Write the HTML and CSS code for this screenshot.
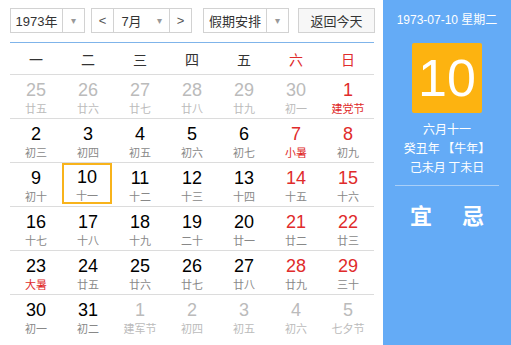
FILE: index.html
```html
<!DOCTYPE html>
<html>
<head>
<meta charset="utf-8">
<link rel="stylesheet" href="styles.css">
</head>
<body>
<div class="page">
  <div class="main">
    <div class="toolbar">
      <div class="ctl year"><span class="val">1973年</span><span class="arr">▾</span></div>
      <div class="ctl month"><span class="nav">&lt;</span><span class="val">7月</span><span class="arr">▾</span><span class="nav">&gt;</span></div>
      <div class="ctl holiday"><span class="val">假期安排</span><span class="arr">▾</span></div>
      <div class="ctl btn">返回今天</div>
    </div>
    <div class="grid">
      <div class="week">
        <span>一</span><span>二</span><span>三</span><span>四</span><span>五</span><span class="red">六</span><span class="red">日</span>
      </div>
      <div class="row">
        <div class="cell other"><b>25</b><i>廿五</i></div>
        <div class="cell other"><b>26</b><i>廿六</i></div>
        <div class="cell other"><b>27</b><i>廿七</i></div>
        <div class="cell other"><b>28</b><i>廿八</i></div>
        <div class="cell other"><b>29</b><i>廿九</i></div>
        <div class="cell other"><b>30</b><i>初一</i></div>
        <div class="cell wk"><b>1</b><i class="fest">建党节</i></div>
      </div>
      <div class="row">
        <div class="cell"><b>2</b><i>初三</i></div>
        <div class="cell"><b>3</b><i>初四</i></div>
        <div class="cell"><b>4</b><i>初五</i></div>
        <div class="cell"><b>5</b><i>初六</i></div>
        <div class="cell"><b>6</b><i>初七</i></div>
        <div class="cell wk"><b>7</b><i class="fest">小暑</i></div>
        <div class="cell wk"><b>8</b><i>初九</i></div>
      </div>
      <div class="row">
        <div class="cell"><b>9</b><i>初十</i></div>
        <div class="cell sel"><b>10</b><i>十一</i></div>
        <div class="cell"><b>11</b><i>十二</i></div>
        <div class="cell"><b>12</b><i>十三</i></div>
        <div class="cell"><b>13</b><i>十四</i></div>
        <div class="cell wk"><b>14</b><i>十五</i></div>
        <div class="cell wk"><b>15</b><i>十六</i></div>
      </div>
      <div class="row">
        <div class="cell"><b>16</b><i>十七</i></div>
        <div class="cell"><b>17</b><i>十八</i></div>
        <div class="cell"><b>18</b><i>十九</i></div>
        <div class="cell"><b>19</b><i>二十</i></div>
        <div class="cell"><b>20</b><i>廿一</i></div>
        <div class="cell wk"><b>21</b><i>廿二</i></div>
        <div class="cell wk"><b>22</b><i>廿三</i></div>
      </div>
      <div class="row">
        <div class="cell"><b>23</b><i class="fest">大暑</i></div>
        <div class="cell"><b>24</b><i>廿五</i></div>
        <div class="cell"><b>25</b><i>廿六</i></div>
        <div class="cell"><b>26</b><i>廿七</i></div>
        <div class="cell"><b>27</b><i>廿八</i></div>
        <div class="cell wk"><b>28</b><i>廿九</i></div>
        <div class="cell wk"><b>29</b><i>三十</i></div>
      </div>
      <div class="row last">
        <div class="cell"><b>30</b><i>初一</i></div>
        <div class="cell"><b>31</b><i>初二</i></div>
        <div class="cell other"><b>1</b><i>建军节</i></div>
        <div class="cell other"><b>2</b><i>初四</i></div>
        <div class="cell other"><b>3</b><i>初五</i></div>
        <div class="cell other"><b>4</b><i>初六</i></div>
        <div class="cell other"><b>5</b><i>七夕节</i></div>
      </div>
    </div>
  </div>
  <div class="side">
    <div class="date">1973-07-10 星期二</div>
    <div class="big">10</div>
    <div class="lunar">
      <div>六月十一</div>
      <div>癸丑年 【牛年】</div>
      <div>己未月 丁未日</div>
    </div>
    <div class="yiji"><span>宜</span><span>忌</span></div>
  </div>
</div>
</body>
</html>
```

FILE: styles.css
```css
* { box-sizing: border-box; margin: 0; padding: 0; }
body {
  margin: 0;
  font-family: "Liberation Sans", Arial, "Noto Sans CJK SC", sans-serif;
  background: #fff;
}
.page { display: flex; width: 511px; height: 345px; }
.main { width: 383px; }
.toolbar {
  display: flex;
  height: 42px;
  padding: 8px 0 0 10px;
  align-items: flex-start;
}
.ctl {
  display: flex;
  height: 25px;
  border: 1px solid #d2d2d2;
  font-size: 13px;
  color: #333;
  align-items: stretch;
  background: #fff;
}
.ctl span { display: flex; align-items: center; justify-content: center; }
.ctl .arr { width: 22px; border-left: 1px solid #d2d2d2; color: #999; font-size: 10px; }
.year { width: 75px; }
.year .val { flex: 1; }
.month { width: 101px; margin-left: 6px; }
.month .nav { width: 22px; color: #555; font-size: 13px; }
.month .nav:first-child { border-right: 1px solid #d2d2d2; }
.month .nav:last-child { border-left: 1px solid #d2d2d2; }
.month .val { flex: 1; }
.month .arr { border-left: none; width: 20px; }
.holiday { width: 86px; margin-left: 11px; }
.holiday .val { flex: 1; }
.btn {
  width: 77px;
  margin-left: 9px;
  justify-content: center;
  align-items: center;
  background: #f7f7f7;
}
.grid { margin-left: 10px; width: 364px; }
.week {
  display: grid;
  grid-template-columns: repeat(7, 52px);
  height: 33px;
  border-top: 1px solid #7fb4ea;
  border-bottom: 1px solid #dcdcdc;
  font-family: "Noto Sans CJK SC", sans-serif;
  font-size: 14px;
  color: #333;
}
.week span { display: flex; align-items: center; justify-content: center; }
.week .red { color: #e02b2b; }
.row {
  display: grid;
  grid-template-columns: repeat(7, 52px);
  height: 44px;
  border-bottom: 1px solid #dcdcdc;
}
.row.last { border-bottom: none; }
.cell {
  display: flex;
  flex-direction: column;
  align-items: center;
  padding-top: 5px;
}
.cell b {
  font-weight: normal;
  font-size: 18px;
  line-height: 20px;
  color: #000;
}
.cell i {
  font-style: normal;
  font-family: "Noto Sans CJK SC", sans-serif;
  font-size: 11px;
  line-height: 16px;
  color: #888;
}
.cell.wk b { color: #e02b2b; }
.cell i.fest { color: #e02b2b; }
.cell.other b { color: #bbb; }
.cell.other i { color: #bbb; }
.cell.sel { box-shadow: inset 0 0 0 2px #f8b31b; margin: 0 2px 2px 0; padding-top: 4px; }
.side {
  width: 128px;
  background: #64abf6;
  color: #fff;
  display: flex;
  flex-direction: column;
  align-items: center;
  font-family: "Liberation Sans", Arial, "Noto Sans CJK SC", sans-serif;
}
.date { font-size: 12px; margin-top: 12px; line-height: 16px; }
.big {
  width: 70px;
  height: 70px;
  margin-top: 15px;
  background: #fdb310;
  font-size: 52px;
  display: flex;
  align-items: center;
  justify-content: center;
  border-radius: 2px;
}
.lunar {
  margin-top: 6px;
  text-align: center;
  font-size: 12px;
  line-height: 19px;
  font-family: "Noto Sans CJK SC", sans-serif;
  width: 104px;
  padding-bottom: 9px;
  border-bottom: 1px solid #a9cff8;
}
.yiji {
  display: flex;
  gap: 30px;
  margin-top: 12px;
  font-size: 22px;
  font-weight: bold;
  font-family: "Noto Sans CJK SC", sans-serif;
}
```
